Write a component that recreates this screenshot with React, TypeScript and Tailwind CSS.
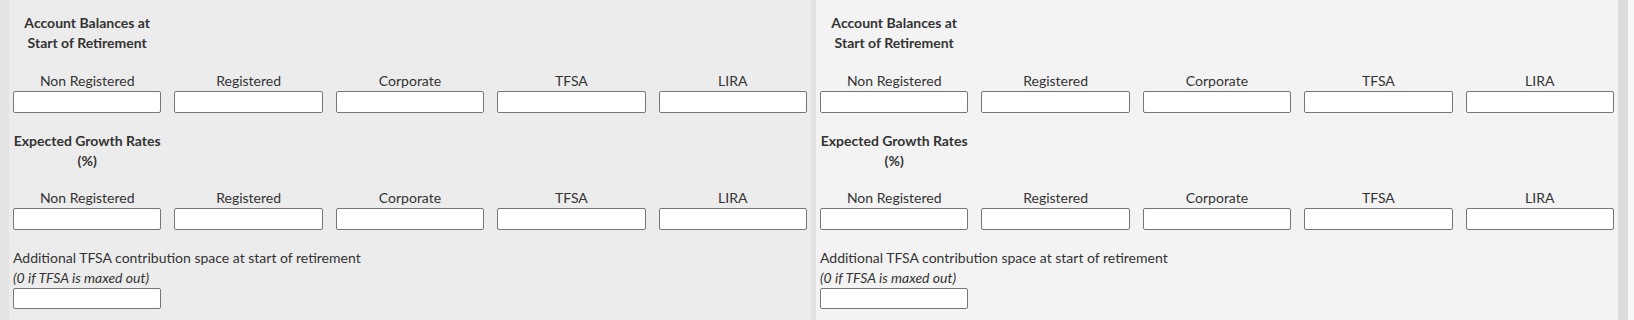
import React from 'react';

const accounts = ['Non Registered', 'Registered', 'Corporate', 'TFSA', 'LIRA'];

const Field = ({ label }: { label: string }) => (
    <div className="flex flex-col">
        <div className="text-center leading-[20px]">{label}</div>
        <input type="text" className="h-[22px] w-full bg-white border border-[#767676] rounded-[2px] outline-none" />
    </div>
);

const Heading = ({ lines }: { lines: string[] }) => (
    <div className="grid grid-cols-5 gap-x-[13px]">
        <div className="flex flex-col items-center font-bold leading-[20px] whitespace-nowrap">
            {lines.map((l) => (
                <span key={l}>{l}</span>
            ))}
        </div>
    </div>
);

const Panel = ({ bg, pr }: { bg: string; pr: string }) => (
    <div className={`w-[802px] shrink-0 pl-[4px] pt-[13px] ${bg} ${pr}`}>
        <Heading lines={['Account Balances at', 'Start of Retirement']} />
        <div className="grid grid-cols-5 gap-x-[13px] mt-[18px]">
            {accounts.map((a) => (
                <Field key={a} label={a} />
            ))}
        </div>
        <div className="mt-[18px]">
            <Heading lines={['Expected Growth Rates', '(%)']} />
        </div>
        <div className="grid grid-cols-5 gap-x-[13px] mt-[17px]">
            {accounts.map((a) => (
                <Field key={a} label={a} />
            ))}
        </div>
        <div className="mt-[18px] leading-[20px]">Additional TFSA contribution space at start of retirement</div>
        <div className="italic leading-[20px]">(0 if TFSA is maxed out)</div>
        <div className="grid grid-cols-5 gap-x-[13px]">
            <input type="text" className="h-[21px] w-full bg-white border border-[#767676] rounded-[2px] outline-none" />
        </div>
    </div>
);

export default function App() {
    return (
        <div className="flex h-[320px] w-[1634px] overflow-hidden text-[14px] text-[#333] font-['Lato',sans-serif]">
            <div className="w-[9px] shrink-0 bg-[#e3e3e3]" />
            <Panel bg="bg-[#ececec]" pr="pr-[4px]" />
            <div className="w-[5px] shrink-0 bg-[#e3e3e3]" />
            <Panel bg="bg-[#f3f3f3]" pr="pr-[4px]" />
            <div className="w-[10px] shrink-0 bg-[#dcdcdc]" />
            <div className="flex-1 bg-[#f6f8fa]" />
        </div>
    );
}
